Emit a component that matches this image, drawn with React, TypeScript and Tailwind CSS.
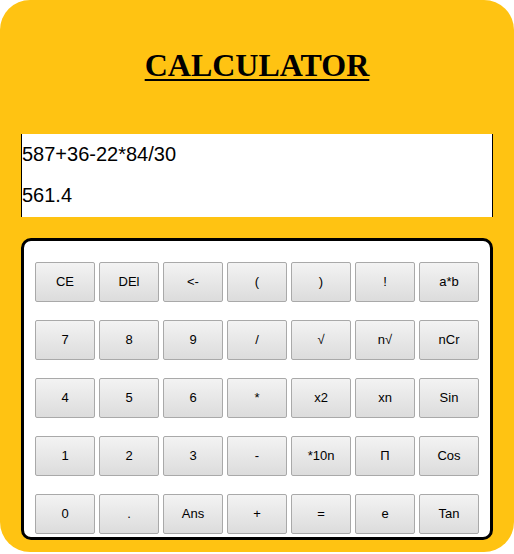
const rows = [
  ['CE', 'DEl', '<-', '(', ')', '!', 'a*b'],
  ['7', '8', '9', '/', '√', 'n√', 'nCr'],
  ['4', '5', '6', '*', 'x2', 'xn', 'Sin'],
  ['1', '2', '3', '-', '*10n', 'Π', 'Cos'],
  ['0', '.', 'Ans', '+', '=', 'e', 'Tan'],
];

export default function App() {
  return (
    <div className="h-[554px] bg-white">
      <div className="h-[552px] rounded-[30px] bg-[#FFC312] px-[21px]">
        <div className="flex h-[134px] items-center justify-center pb-[4px]">
          <h1 className="font-['Liberation_Serif',serif] text-[32px] font-bold leading-none text-black underline decoration-2 underline-offset-[3px]">
            CALCULATOR
          </h1>
        </div>

        <div className="h-[83px] border-x border-black bg-white pt-[9px] font-['Liberation_Sans',Arial,sans-serif] text-[20px] leading-[23px] text-black">
          <div>587+36-22*84/30</div>
          <div className="mt-[18px]">561.4</div>
        </div>

        <div className="mt-[21px] h-[302px] rounded-[10px] border-[3px] border-black bg-white pt-[21px]">
          <div className="flex flex-col items-center gap-[18px]">
            {rows.map((row, i) => (
              <div key={i} className="flex gap-[4px]">
                {row.map((k) => (
                  <button
                    key={k}
                    className="h-[40px] w-[60px] rounded-[2px] border border-[#a9a9a9] bg-gradient-to-b from-[#f3f3f3] to-[#dcdcdc] font-['Liberation_Sans',Arial,sans-serif] text-[13px] text-black"
                  >
                    {k}
                  </button>
                ))}
              </div>
            ))}
          </div>
        </div>
      </div>
    </div>
  );
}
